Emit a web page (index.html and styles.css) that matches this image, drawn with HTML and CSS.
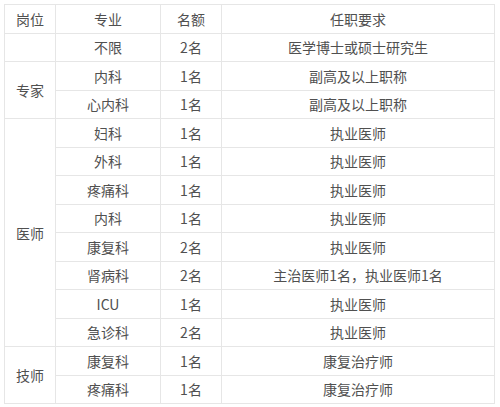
FILE: index.html
```html
<!DOCTYPE html>
<html lang="zh-CN">
<head>
<meta charset="utf-8">
<title>招聘岗位</title>
<link rel="stylesheet" href="styles.css">
</head>
<body>
<div class="wrap">
<table class="jobs">
<colgroup>
<col class="c1"><col class="c2"><col class="c3"><col class="c4">
</colgroup>
<tbody>
<tr><td>岗位</td><td>专业</td><td>名额</td><td>任职要求</td></tr>
<tr><td></td><td>不限</td><td>2名</td><td>医学博士或硕士研究生</td></tr>
<tr><td rowspan="2">专家</td><td>内科</td><td>1名</td><td>副高及以上职称</td></tr>
<tr><td>心内科</td><td>1名</td><td>副高及以上职称</td></tr>
<tr><td rowspan="8">医师</td><td>妇科</td><td>1名</td><td>执业医师</td></tr>
<tr><td>外科</td><td>1名</td><td>执业医师</td></tr>
<tr><td>疼痛科</td><td>1名</td><td>执业医师</td></tr>
<tr><td>内科</td><td>1名</td><td>执业医师</td></tr>
<tr><td>康复科</td><td>2名</td><td>执业医师</td></tr>
<tr><td>肾病科</td><td>2名</td><td>主治医师1名，执业医师1名</td></tr>
<tr><td>ICU</td><td>1名</td><td>执业医师</td></tr>
<tr><td>急诊科</td><td>2名</td><td>执业医师</td></tr>
<tr><td rowspan="2">技师</td><td>康复科</td><td>1名</td><td>康复治疗师</td></tr>
<tr><td>疼痛科</td><td>1名</td><td>康复治疗师</td></tr>
</tbody>
</table>
</div>
</body>
</html>
```
FILE: styles.css
```css
html, body {
  margin: 0;
  padding: 0;
  background: #ffffff;
}
.wrap {
  padding: 4px;
}
.jobs {
  border-collapse: collapse;
  table-layout: fixed;
  width: 490px;
  font-family: "Microsoft YaHei", "Noto Sans CJK SC", "Noto Sans", sans-serif;
  font-size: 14px;
  color: #505050;
}
.c1 { width: 51px; }
.c2 { width: 105px; }
.c3 { width: 61px; }
.c4 { width: 273px; }
.jobs td {
  border: 1px solid #e6e6e6;
  height: 28.5px;
  padding: 0;
  text-align: center;
  vertical-align: middle;
  line-height: 20px;
  box-sizing: border-box;
}
```
